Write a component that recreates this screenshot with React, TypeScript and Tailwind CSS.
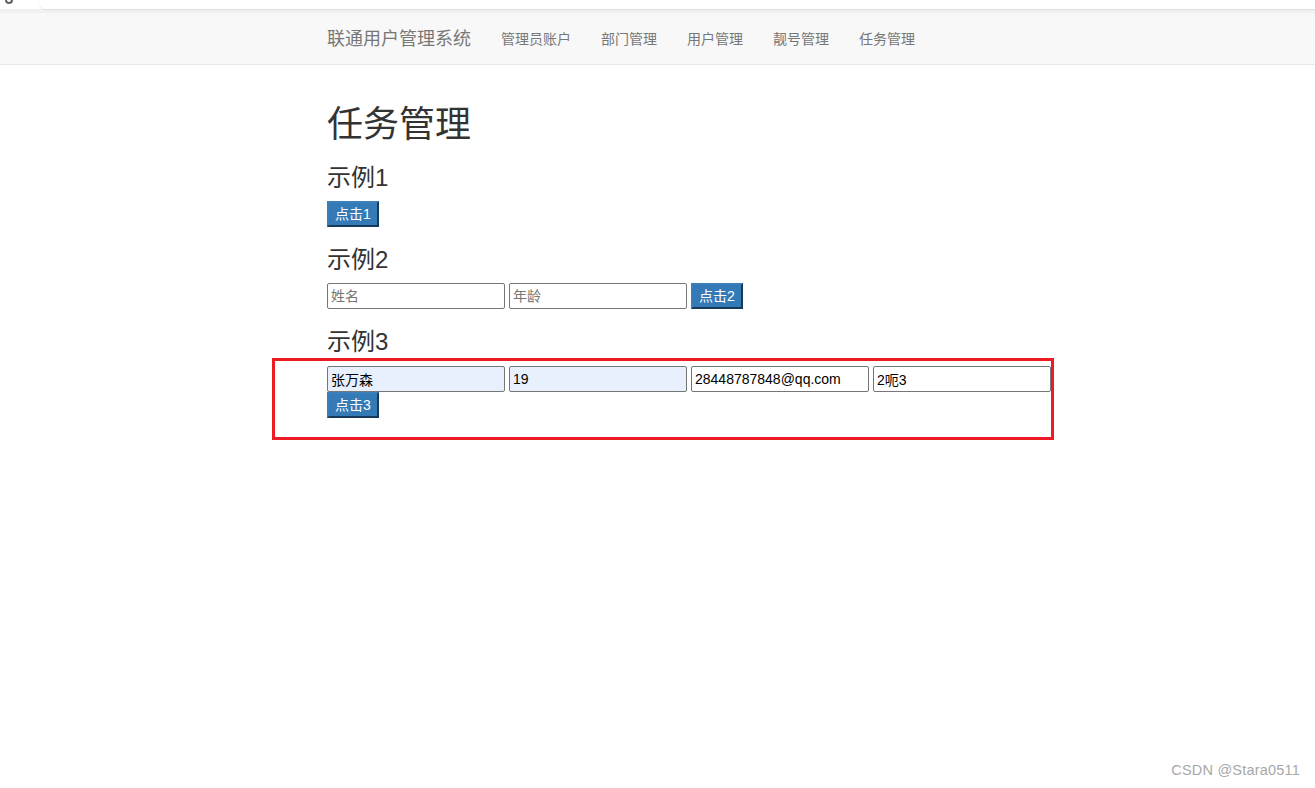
import React from 'react';

const navLinks = ['管理员账户', '部门管理', '用户管理', '靓号管理', '任务管理'];

const Btn: React.FC<{ label: string }> = ({ label }) => (
  <button className="h-[26px] px-[6px] text-[14px] leading-[20px] text-white bg-[#337ab7] border-2 border-t-[#3b7fba] border-l-[#3b7fba] border-r-[#17395a] border-b-[#17395a] shrink-0">
    {label}
  </button>
);

const Field: React.FC<{ placeholder?: string; value?: string; filled?: boolean }> = ({ placeholder, value, filled }) => (
  <input
    readOnly
    placeholder={placeholder}
    value={value ?? ''}
    className={`w-[178px] h-[26px] px-[3px] text-[14px] leading-[20px] text-black placeholder:text-[#757575] border border-[#767676] rounded-[2px] outline-none shrink-0 ${
      filled ? 'bg-[#e8f0fe]' : 'bg-white'
    }`}
  />
);

const App: React.FC = () => {
  return (
    <div className="relative min-h-[788px] bg-white text-[#333] font-['Liberation_Sans','Noto_Sans_CJK_SC',sans-serif]">
      {/* 浏览器地址栏残影 */}
      <div className="h-[9px] bg-white flex">
        <div className="w-[38px] flex justify-start pl-[5px]">
          <div className="w-[8px] h-[4px] rounded-b-full border-2 border-t-0 border-[#5f6368]" />
        </div>
        <div className="flex-1 rounded-bl-[8px] bg-white shadow-[0_1px_1px_rgba(0,0,0,0.08)]" />
      </div>
      <div className="h-[4px] bg-[#f0f0f0]" />

      {/* 导航栏 */}
      <div className="h-[52px] bg-[#f8f8f8] border-b border-[#e7e7e7] flex items-center pl-[327px]">
        <span className="text-[18px] leading-[20px] text-[#777] pr-[15px]">联通用户管理系统</span>
        {navLinks.map((l) => (
          <span key={l} className="text-[14px] leading-[20px] text-[#777] px-[15px]">
            {l}
          </span>
        ))}
      </div>

      {/* 内容 */}
      <div className="pl-[327px] pt-[40px] flex flex-col items-start">
        <h1 className="text-[36px] leading-[40px] text-[#333]">任务管理</h1>

        <h3 className="mt-[20px] text-[24px] leading-[26px]">示例1</h3>
        <div className="mt-[10px]">
          <Btn label="点击1" />
        </div>

        <h3 className="mt-[20px] text-[24px] leading-[26px]">示例2</h3>
        <div className="mt-[10px] flex gap-[4px]">
          <Field placeholder="姓名" />
          <Field placeholder="年龄" />
          <Btn label="点击2" />
        </div>

        <h3 className="mt-[20px] text-[24px] leading-[26px]">示例3</h3>
        <div className="mt-[3px] ml-[-55px] w-[782px] border-[3px] border-[#ed1c24] pl-[52px] pt-[5px] pb-[19px]">
          <div className="flex flex-wrap gap-x-[4px]">
            <Field value="张万森" filled />
            <Field value="19" filled />
            <Field value="28448787848@qq.com" />
            <Field value="2呃3" />
            <Btn label="点击3" />
          </div>
        </div>
      </div>

      <div className="absolute right-[15px] bottom-[6px] text-[14.5px] tracking-[0.2px] text-[#a8a8a8]">CSDN @Stara0511</div>
    </div>
  );
};

export default App;
